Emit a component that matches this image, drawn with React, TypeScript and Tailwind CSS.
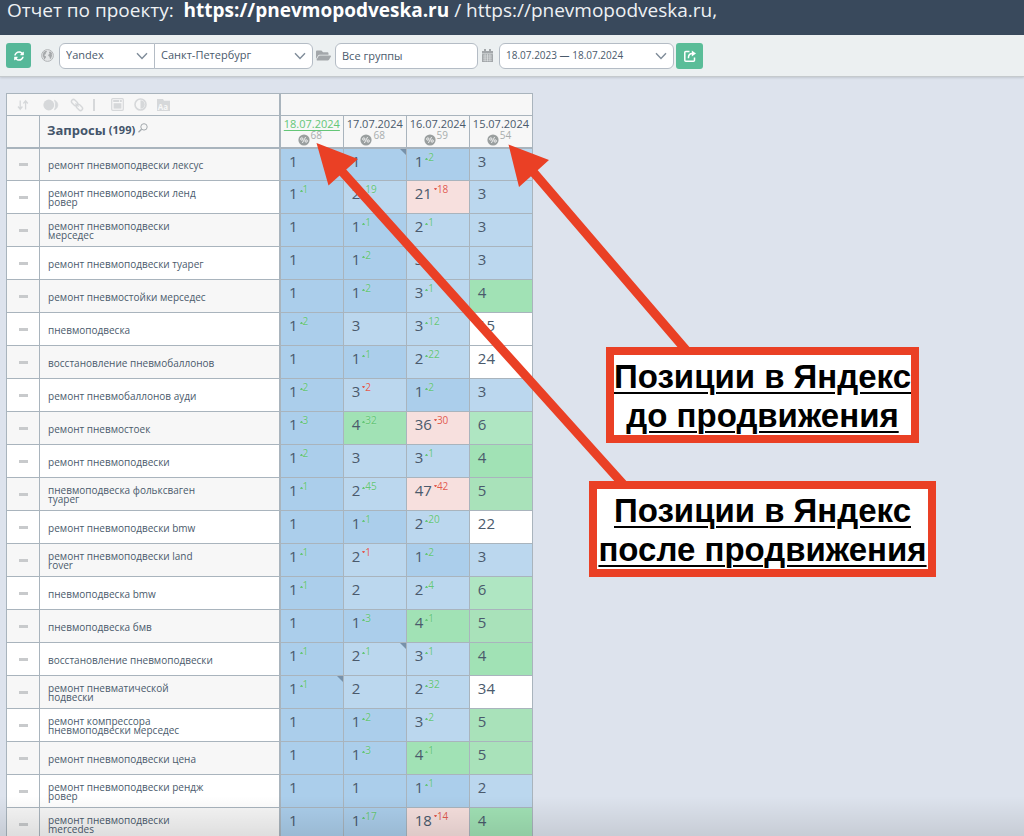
import type { ReactNode } from "react";
import { FaSyncAlt, FaFolderOpen } from "react-icons/fa";

type Cell = { pos: number; delta?: number; tone: string; note?: boolean };

const B1 = "bg-[#abceeb]";
const B2 = "bg-[#bbd7ee]";
const G4 = "bg-[#a1e2b5]";
const G5 = "bg-[#a9e2ba]";
const G6 = "bg-[#afe6c2]";
const RD = "bg-[#f7e0de]";
const WH = "bg-white";

const c = (pos: number, tone: string, delta?: number, note?: boolean): Cell => ({ pos, tone, delta, note });

const rows: { query: string; cells: Cell[] }[] = [
  { query: "ремонт пневмоподвески лексус", cells: [c(1, B1), c(1, B1, undefined, true), c(1, B1, 2), c(3, B2)] },
  { query: "ремонт пневмоподвески ленд\nровер", cells: [c(1, B1, 1), c(2, B2, 19), c(21, RD, -18), c(3, B2)] },
  { query: "ремонт пневмоподвески\nмерседес", cells: [c(1, B1), c(1, B1, 1), c(2, B2, 1), c(3, B2)] },
  { query: "ремонт пневмоподвески туарег", cells: [c(1, B1), c(1, B1, 2), c(3, B2), c(3, B2)] },
  { query: "ремонт пневмостойки мерседес", cells: [c(1, B1), c(1, B1, 2), c(3, B2, 1), c(4, G4)] },
  { query: "пневмоподвеска", cells: [c(1, B1, 2), c(3, B2), c(3, B2, 12), c(15, WH)] },
  { query: "восстановление пневмобаллонов", cells: [c(1, B1), c(1, B1, 1), c(2, B2, 22), c(24, WH)] },
  { query: "ремонт пневмобаллонов ауди", cells: [c(1, B1, 2), c(3, B2, -2), c(1, B1, 2), c(3, B2)] },
  { query: "ремонт пневмостоек", cells: [c(1, B1, 3), c(4, G4, 32), c(36, RD, -30), c(6, G6)] },
  { query: "ремонт пневмоподвески", cells: [c(1, B1, 2), c(3, B2), c(3, B2, 1), c(4, G4)] },
  { query: "пневмоподвеска фольксваген\nтуарег", cells: [c(1, B1, 1), c(2, B2, 45), c(47, RD, -42), c(5, G5)] },
  { query: "ремонт пневмоподвески bmw", cells: [c(1, B1), c(1, B1, 1), c(2, B2, 20), c(22, WH)] },
  { query: "ремонт пневмоподвески land\nrover", cells: [c(1, B1, 1), c(2, B2, -1), c(1, B1, 2), c(3, B2)] },
  { query: "пневмоподвеска bmw", cells: [c(1, B1, 1), c(2, B2), c(2, B2, 4), c(6, G6)] },
  { query: "пневмоподвеска бмв", cells: [c(1, B1), c(1, B1, 3), c(4, G4, 1), c(5, G5)] },
  { query: "восстановление пневмоподвески", cells: [c(1, B1, 1), c(2, B2, 1, true), c(3, B2, 1), c(4, G4)] },
  { query: "ремонт пневматической\nподвески", cells: [c(1, B1, 1, true), c(2, B2), c(2, B2, 32), c(34, WH)] },
  { query: "ремонт компрессора\nпневмоподвески мерседес", cells: [c(1, B1), c(1, B1, 2), c(3, B2, 2), c(5, G5)] },
  { query: "ремонт пневмоподвески цена", cells: [c(1, B1), c(1, B1, 3), c(4, G4, 1), c(5, G5)] },
  { query: "ремонт пневмоподвески рендж\nровер", cells: [c(1, B1), c(1, B1), c(1, B1, 1), c(2, B2)] },
  { query: "ремонт пневмоподвески\nmercedes", cells: [c(1, B1), c(1, B1, 17), c(18, RD, -14), c(4, G4)] },
];

const dates = [
  { label: "18.07.2024", percent: 68, active: true },
  { label: "17.07.2024", percent: 68 },
  { label: "16.07.2024", percent: 59 },
  { label: "15.07.2024", percent: 54 },
];

function Chevron() {
  return (
    <svg viewBox="0 0 12 8" className="pointer-events-none absolute right-[7px] top-[9px] h-2 w-3" fill="none" stroke="#7f8c99" strokeWidth="1.4" aria-hidden="true">
      <path d="M1 1.2 6 6.4 11 1.2" />
    </svg>
  );
}

function Picker({ label, value, className }: { label: string; value: string; className: string }) {
  return (
    <div className="relative">
      <select aria-label={label} className={`h-[26px] appearance-none border border-[#b4bcc5] bg-white pl-1.5 outline-none ${className}`}>
        <option>{value}</option>
      </select>
      <Chevron />
    </div>
  );
}

function GlobeIcon() {
  return (
    <svg viewBox="0 0 13 13" className="size-[13px]" aria-hidden="true">
      <circle cx="6.500" cy="6.500" r="5.900" fill="#e3e5e6" stroke="#b4b7b9" strokeWidth="1" />
      <path d="M2.400 3.400 4.200 2l1.800.1-.5 1.200-1 .6.600 1-1.300.6-.5 1 1.500.7.3 1.100-1 1.100-.4 1.400-.8-1.100-.4-1.800-.9-1zM8.400 2.600l1.500.2 1.400 2.300-.7.5.5 1-1.100 2.800-1 .5-.5-2.100-1.300-1.100.3-1.300 1.300-.6-.9-.7z" fill="#a5a8aa" />
    </svg>
  );
}

function CalendarIcon() {
  return (
    <svg viewBox="0 0 11 13" className="h-[13px] w-[11px]" aria-hidden="true">
      <path d="M0 2h11v11H0z" fill="#a3a7aa" />
      <path d="M2 0h2v3H2zM7 0h2v3H7z" fill="#a3a7aa" />
      <path d="M0 4.7h11M1 7h9M1 9.1h9M1 11.2h9M3.1 5v7.4M5.5 5v7.4M7.9 5v7.4" stroke="#ecf0f1" strokeWidth=".55" />
    </svg>
  );
}

function ShareIcon() {
  return (
    <svg viewBox="0 0 12 12" className="size-3" fill="none" stroke="white" strokeWidth="1.5" aria-hidden="true">
      <path d="M5.500 1.500H1.800a1 1 0 0 0-1 1V10.200a1 1 0 0 0 1 1h7.700a1 1 0 0 0 1-1V7.600" />
      <path d="M4.400 8.200C4.400 5 6 3.600 8.400 3.600" />
      <path d="M7.800.4 12 3.600 7.800 6.600z" fill="white" stroke="none" />
    </svg>
  );
}

function PercentIcon() {
  return (
    <svg viewBox="0 0 12 12" className="size-3" aria-hidden="true">
      <circle cx="6" cy="6" r="5.6" fill="#9a9f9f" />
      <g fill="none" stroke="#f7f7f7" strokeWidth=".9">
        <path d="M7.600 3 4.400 9" />
        <circle cx="3.800" cy="5" r="1.200" />
        <circle cx="8.200" cy="7" r="1.200" />
      </g>
    </svg>
  );
}

function Tool({ label, children }: { label: string; children: ReactNode }) {
  return (
    <button type="button" aria-label={label} className="flex h-4 w-4 items-center justify-center">
      {children}
    </button>
  );
}

function TableTools() {
  return (
    <div className="flex h-full items-center pl-2 text-[#d6d8da]">
      <Tool label="Сортировка">
        <svg viewBox="0 0 12 12" className="size-3" fill="none" stroke="currentColor" strokeWidth="1.3">
          <path d="M3.2 1.500v8M1 7.500l2.200 2.700L5.400 7.500M8.600 10.500v-8M6.400 4.500l2.200-2.700 2.200 2.700" />
        </svg>
      </Tool>
      <span className="w-3" />
      <Tool label="Сравнение">
        <svg viewBox="0 0 16 12" className="h-3 w-4">
          <circle cx="5.800" cy="6" r="5.400" fill="currentColor" />
          <path d="M11.500 1.200c4.400 2.200 4.400 7.400 0 9.600 1.400-3 1.400-6.600 0-9.600z" fill="currentColor" stroke="currentColor" strokeWidth=".8" />
        </svg>
      </Tool>
      <span className="w-2.5" />
      <Tool label="Ссылки">
        <svg viewBox="0 0 14 14" className="size-3.5" fill="none" stroke="currentColor" strokeWidth="1.4">
          <rect x="-3.600" y="-2" width="7.200" height="4" rx="2" transform="translate(4.600 4.600) rotate(45)" />
          <rect x="-3.600" y="-2" width="7.200" height="4" rx="2" transform="translate(9.400 9.400) rotate(45)" />
          <path d="m5.400 5.400 3.200 3.200" />
        </svg>
      </Tool>
      <span className="ml-2 mr-3.5 h-3 w-0.5 bg-[#d6d8da]" />
      <Tool label="Вид">
        <svg viewBox="0 0 13 13" className="size-[13px]" fill="none" stroke="currentColor">
          <rect x=".7" y=".7" width="11.600" height="11.600" rx="1" strokeWidth="1.200" />
          <path d="M2.200 3h6M9 3h1.800" strokeWidth="1.800" />
          <rect x="2.600" y="5.200" width="7.800" height="5.400" fill="currentColor" stroke="none" />
        </svg>
      </Tool>
      <span className="w-[7px]" />
      <Tool label="Контраст">
        <svg viewBox="0 0 13 13" className="size-[13px]">
          <circle cx="6.500" cy="6.500" r="5.500" fill="none" stroke="currentColor" strokeWidth="1.600" />
          <path d="M6.500 2.200a4.300 4.300 0 0 1 0 8.600z" fill="currentColor" />
        </svg>
      </Tool>
      <span className="w-[7px]" />
      <Tool label="Шрифт">
        <span className="relative flex h-3 w-[13px] items-end justify-center">
          <svg viewBox="0 0 13 12" className="absolute inset-0 h-3 w-[13px]" fill="currentColor">
            <path d="M0 0h6l1 1.800h6V12H0z" />
          </svg>
          <span className="relative text-[8px] font-bold leading-[9px] text-[#f7f7f7]">Aa</span>
        </span>
      </Tool>
    </div>
  );
}

function PositionCell({ cell }: { cell: Cell }) {
  const up = (cell.delta ?? 0) > 0;
  return (
    <td className={`relative border border-[#a9b4bd] p-0 pl-2 align-top ${cell.tone}`}>
      <div className="flex items-start text-[15px] leading-[24px] text-[#4a5a6c]">
        <span>{cell.pos}</span>
        {cell.delta !== undefined && (
          <span className={`ml-0.5 flex items-center text-[10px] leading-4 ${up ? "text-[#64c677]" : "text-[#e25a4f]"}`}>
            <svg viewBox="0 0 3 2" className={up ? "mt-1 h-0.5 w-[3px]" : "h-0.5 w-[3px]"} fill="currentColor" aria-hidden="true">
              <path d={up ? "M0 2 1 0h1l1 2z" : "M0 0h3L2 2H1z"} />
            </svg>
            <span className="[text-shadow:0_0_2px_rgba(255,255,255,0.4)]">{Math.abs(cell.delta)}</span>
          </span>
        )}
      </div>
      {cell.note && (
        <svg viewBox="0 0 6 6" className="absolute right-0 top-0 size-1.5" fill="#7791aa" aria-hidden="true">
          <path d="M0 0h6v6z" />
        </svg>
      )}
    </td>
  );
}

function Annotation({ lines, className }: { lines: [string, string]; className: string }) {
  return (
    <div className={`absolute flex flex-col items-center justify-center whitespace-nowrap border-8 border-[#ea4025] bg-white pt-0.5 font-['Liberation_Sans',sans-serif] text-[33px] font-bold leading-[39px] text-black underline decoration-2 underline-offset-4 ${className}`}>
      <span>{lines[0]}</span>
      <span>{lines[1]}</span>
    </div>
  );
}

export default function App() {
  return (
    <div className="relative flex h-screen flex-col overflow-hidden bg-[#dde3ed] font-['Open_Sans',sans-serif] text-[#4a5a6c]">
      <header className="h-[35px] shrink-0 bg-[#39495c] pl-[7px]">
        <h1 className="whitespace-pre text-[19px] leading-[20px] text-[#eef1f4]">
          Отчет по проекту:  <strong className="font-bold text-white">https://pnevmopodveska.ru</strong> / https://pnevmopodveska.ru,
        </h1>
      </header>

      <div className="flex h-[42px] shrink-0 items-center border-b border-[#c5cacd] bg-[#ecf0f1] pl-1.5 text-[11px] shadow-[0_1px_2px_rgba(0,0,0,0.12)]">
        <button type="button" aria-label="Обновить" className="flex size-[25px] items-center justify-center rounded-[3px] bg-[#56b899] text-white">
          <FaSyncAlt className="size-2.5" />
        </button>
        <span className="ml-2.5 mr-[5px]">
          <GlobeIcon />
        </span>
        <Picker label="Поисковая система" value="Yandex" className="w-24 rounded-l-md" />
        <div className="-ml-px">
          <Picker label="Регион" value="Санкт-Петербург" className="w-[159px] rounded-r-md" />
        </div>
        <FaFolderOpen className="ml-[3px] mr-1 size-[15px] text-[#a3a7aa]" />
        <input aria-label="Группы" defaultValue="Все группы" className="h-[26px] w-[143px] rounded-md border border-[#b4bcc5] bg-white px-1.5 outline-none" />
        <span className="ml-1 mr-1.5">
          <CalendarIcon />
        </span>
        <Picker label="Период" value="18.07.2023 — 18.07.2024" className="w-[175px] rounded-md text-[10px]" />
        <button type="button" aria-label="Экспорт" className="ml-0.5 flex h-[26px] w-[27px] items-center justify-center rounded-[3px] bg-[#5abd98]">
          <ShareIcon />
        </button>
      </div>

      <main className="shrink-0 pl-1.5 pt-4">
        <table className="w-[527px] table-fixed border-collapse border border-[#a9b4bd]">
          <colgroup>
            <col className="w-[33px]" />
            <col className="w-[240px]" />
            <col className="w-[63px]" />
            <col className="w-[63px]" />
            <col className="w-[63px]" />
            <col className="w-[63px]" />
          </colgroup>
          <thead className="bg-[#f7f7f7]">
            <tr className="h-[22px]">
              <th colSpan={2} className="border border-r-2 border-[#a9b4bd] p-0">
                <TableTools />
              </th>
              <th colSpan={4} className="border border-[#a9b4bd] p-0" />
            </tr>
            <tr className="h-8">
              <th className="border border-b-2 border-[#a9b4bd] p-0" />
              <th scope="col" className="border border-b-2 border-r-2 border-[#a9b4bd] p-0 pl-[7px] text-left text-[13px] leading-4 text-[#44556a]">
                <span className="flex items-center pb-0.5">
                  Запросы <span className="ml-[3px] text-[11px]">(199)</span>
                  <svg viewBox="0 0 10 10" className="mb-1 ml-[3px] size-2.5" fill="none" stroke="#a3a9ad" aria-hidden="true">
                    <circle cx="6" cy="3.900" r="3.200" />
                    <path d="M3.600 6.200.5 9.300" strokeWidth="1.300" />
                  </svg>
                </span>
              </th>
              {dates.map((d) => (
                <th key={d.label} scope="col" className="border border-b-2 border-[#a9b4bd] p-0 align-top font-normal">
                  <div className={`mt-px text-center text-[11px] leading-[13px] ${d.active ? "text-[#64c677] underline underline-offset-2" : ""}`}>{d.label}</div>
                  <div className="flex justify-center gap-px pr-1 text-[10px] leading-[11px] text-[#a8adad]">
                    <span className="mt-1">
                      <PercentIcon />
                    </span>
                    <span>{d.percent}</span>
                  </div>
                </th>
              ))}
            </tr>
          </thead>
          <tbody>
            {rows.map((row) => (
              <tr key={row.query} className="h-[33px] bg-white odd:bg-[#f7f7f7]">
                <td className="border border-[#a9b4bd] p-0">
                  <span className="mx-auto block h-[3px] w-[9px] bg-[#c8cacc]" />
                </td>
                <td className="whitespace-pre-line border border-r-2 border-[#a9b4bd] p-0 px-2 text-[10px] leading-[9px]">
                  <div className="pt-0.5">{row.query}</div>
                </td>
                {row.cells.map((cell, i) => (
                  <PositionCell key={dates[i].label} cell={cell} />
                ))}
              </tr>
            ))}
          </tbody>
        </table>
      </main>

      <svg viewBox="0 0 1024 836" className="pointer-events-none absolute left-0 top-0 h-[836px] w-[1024px]" fill="#ea4025" aria-hidden="true">
        <path d="M337 166 623 484M529 167 686 350" stroke="#ea4025" strokeWidth="9" />
        <path d="M316.500 143 358 159 328.500 185.500zM508.500 144.500 549 160 519 187z" />
      </svg>
      <Annotation lines={["Позиции в Яндекс", "до продвижения"]} className="left-[606px] top-[347px] h-24 w-[313px]" />
      <Annotation lines={["Позиции в Яндекс", "после продвижения"]} className="left-[589px] top-[481px] h-24 w-[347px]" />
      <div className="pointer-events-none absolute inset-x-0 bottom-0 h-10 bg-linear-to-b from-transparent to-black/10" />
    </div>
  );
}
